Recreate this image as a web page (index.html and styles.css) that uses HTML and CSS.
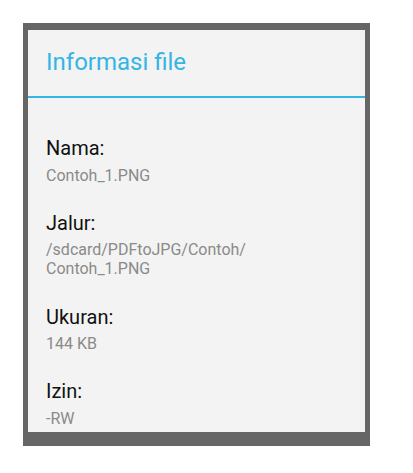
FILE: index.html
```html
<!DOCTYPE html>
<html>
<head>
<meta charset="utf-8">
<link rel="stylesheet" href="styles.css">
</head>
<body>
<div class="frame">
  <div class="panel">
    <div class="header">
      <h1 class="title">Informasi file</h1>
    </div>
    <div class="body">
      <div class="item">
        <div class="label">Nama:</div>
        <div class="value">Contoh_1.PNG</div>
      </div>
      <div class="item">
        <div class="label">Jalur:</div>
        <div class="value">/sdcard/PDFtoJPG/Contoh/<br>Contoh_1.PNG</div>
      </div>
      <div class="item">
        <div class="label">Ukuran:</div>
        <div class="value">144 KB</div>
      </div>
      <div class="item">
        <div class="label">Izin:</div>
        <div class="value">-RW</div>
      </div>
    </div>
  </div>
</div>
</body>
</html>
```
FILE: styles.css
```css
html, body {
  margin: 0;
  padding: 0;
  background: #ffffff;
  font-family: Roboto, "Noto Sans", sans-serif;
}
.frame {
  margin: 23px 0 0 23px;
  width: 347px;
  height: 423px;
  box-sizing: border-box;
  padding: 7px 5px 14px 5px;
  background: #666666;
}
.panel {
  height: 100%;
  background: #f3f3f3;
  overflow: hidden;
}
.header {
  padding: 16px 18px 18px 18px;
  border-bottom: 2px solid #33b5e5;
}
.title {
  margin: 0;
  font-size: 24px;
  line-height: 32px;
  font-weight: 400;
  color: #33b5e5;
}
.body {
  padding: 37px 18px 0 18px;
  display: flex;
  flex-direction: column;
  gap: 24.6px;
}
.label {
  font-size: 20px;
  line-height: 26px;
  color: #111111;
}
.value {
  margin-top: 5.5px;
  font-size: 16px;
  line-height: 18.8px;
  color: #8a8a8a;
}
```
